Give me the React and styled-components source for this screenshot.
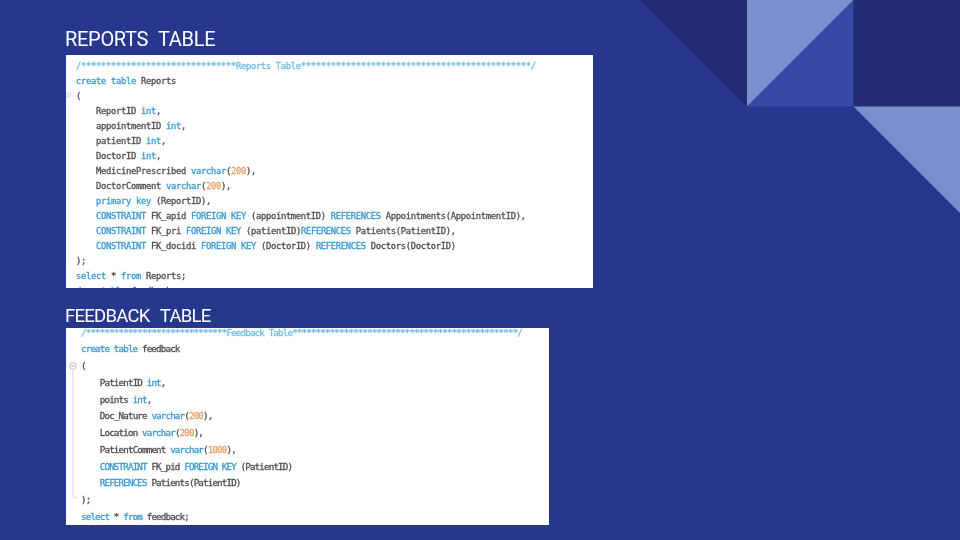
import React from "react";
import styled, { createGlobalStyle } from "styled-components";

const Global = createGlobalStyle`
  html, body { margin: 0; padding: 0; background: #27378d; }
`;

const Slide = styled.main`
  position: relative;
  width: 960px;
  height: 540px;
  overflow: hidden;
  box-sizing: border-box;
  background: #27378d;
  padding: 26px 0 0 65px;
  display: flex;
  flex-direction: column;
  align-items: flex-start;
`;

const Decor = styled.svg`
  position: absolute;
  top: 0;
  right: 0;
  width: 320px;
  height: 214px;
`;

const Title = styled.h2`
  margin: ${(p) => p.$top}px 0 0;
  font-family: "Roboto", "Open Sans", sans-serif;
  font-weight: 400;
  font-size: ${(p) => p.$size}px;
  letter-spacing: ${(p) => p.$track}px;
  word-spacing: ${(p) => p.$word}px;
  line-height: 26px;
  height: ${(p) => p.$h}px;
  color: #fff;
  white-space: pre;
  filter: blur(0.2px);
`;

const Shot = styled.section`
  position: relative;
  margin-left: 1px;
  width: ${(p) => p.$w}px;
  height: ${(p) => p.$h}px;
  background: #fff;
  overflow: hidden;
  box-sizing: border-box;
  padding-left: ${(p) => p.$left}px;
`;

const Code = styled.pre`
  margin: ${(p) => p.$top}px 0 0;
  font-family: "DejaVu Sans Mono", "Liberation Mono", monospace;
  font-size: ${(p) => p.$size}px;
  letter-spacing: ${(p) => p.$track}px;
  line-height: ${(p) => p.$line}px;
  color: #4d4d4d;
  filter: blur(0.45px);
  font-weight: 400;
  -webkit-text-stroke: 0.3px currentColor;
`;

const Line = styled.div`
  height: ${(p) => p.$line}px;
  padding-left: ${(p) => p.$indent || 0}px;
  white-space: pre;
`;

const K = styled.span` color: #3a98d4; `;
const C = styled.span` color: #6fbbe6; `;
const N = styled.span` color: #e8a165; `;

const Fold = styled.svg`
  position: absolute;
  left: ${(p) => p.$x}px;
  top: ${(p) => p.$y}px;
  filter: blur(0.3px);
`;

const star = (n) => "*".repeat(n);

function ReportsCode() {
  const L = ({ $indent, ...p }) => <Line $line={15} $indent={$indent ? 20 : 0} {...p} />;
  return (
    <Code $size={8.8} $track={-0.3} $line={15} $top={3.5}>
      <L><C>/{star(31)}Reports Table{star(46)}/</C></L>
      <L><K>create table</K> Reports</L>
      <L>(</L>
      <L $indent>ReportID <K>int</K>,</L>
      <L $indent>appointmentID <K>int</K>,</L>
      <L $indent>patientID <K>int</K>,</L>
      <L $indent>DoctorID <K>int</K>,</L>
      <L $indent>MedicinePrescribed <K>varchar</K>(<N>200</N>),</L>
      <L $indent>DoctorComment <K>varchar</K>(<N>200</N>),</L>
      <L $indent><K>primary key</K> (ReportID),</L>
      <L $indent><K>CONSTRAINT</K> FK_apid <K>FOREIGN KEY</K> (appointmentID) <K>REFERENCES</K> Appointments(AppointmentID),</L>
      <L $indent><K>CONSTRAINT</K> FK_pri <K>FOREIGN KEY</K> (patientID)<K>REFERENCES</K> Patients(PatientID),</L>
      <L $indent><K>CONSTRAINT</K> FK_docidi <K>FOREIGN KEY</K> (DoctorID) <K>REFERENCES</K> Doctors(DoctorID)</L>
      <L>);</L>
      <L><K>select</K> * <K>from</K> Reports;</L>
      <L><K>drop table</K> feedback;</L>
    </Code>
  );
}

function FeedbackCode() {
  const L = ({ $indent, ...p }) => <Line $line={16.75} $indent={$indent ? 18.8 : 0} {...p} />;
  return (
    <Code $size={9.2} $track={-0.84} $line={16.75} $top={-3.4}>
      <L><C>/{star(30)}Feedback Table{star(48)}/</C></L>
      <L><K>create table</K> feedback</L>
      <L>(</L>
      <L $indent>PatientID <K>int</K>,</L>
      <L $indent>points <K>int</K>,</L>
      <L $indent>Doc_Nature <K>varchar</K>(<N>200</N>),</L>
      <L $indent>Location <K>varchar</K>(<N>200</N>),</L>
      <L $indent>PatientComment <K>varchar</K>(<N>1000</N>),</L>
      <L $indent><K>CONSTRAINT</K> FK_pid <K>FOREIGN KEY</K> (PatientID)</L>
      <L $indent><K>REFERENCES</K> Patients(PatientID)</L>
      <L>);</L>
      <L><K>select</K> * <K>from</K> feedback;</L>
    </Code>
  );
}

export default function App() {
  return (
    <>
      <Global />
      <Slide>
        <Decor viewBox="640 0 320 214">
          <polygon points="640,0 747,0 747,106.5" fill="#212c75" />
          <polygon points="747,0 853.5,0 747,106.5" fill="#7a90ce" />
          <polygon points="853.5,0 853.5,106.5 747,106.5" fill="#3949a8" />
          <rect x="853.5" y="0" width="106.5" height="106.5" fill="#212c75" />
          <polygon points="853.5,106.5 960,106.5 960,213" fill="#7a90ce" />
        </Decor>

        <Title $top={0} $size={20} $track={-0.3} $word={5.5} $h={29}>REPORTS TABLE</Title>
        <Shot $w={527} $h={233} $left={10}>
          <Fold $x={0} $y={36} width="8" height="172" viewBox="0 0 8 172">
            <circle cx="2" cy="4" r="2.5" fill="none" stroke="#c9c9c9" strokeWidth="0.8" />
            <path d="M1 4h2" stroke="#b5b5b5" strokeWidth="0.7" />
            <path d="M2 7V166q0 2 3 2" fill="none" stroke="#eeeeee" strokeWidth="0.7" />
          </Fold>
          <ReportsCode />
        </Shot>

        <Title $top={15} $size={18.5} $track={-0.75} $word={1.5} $h={25}>{"FEEDBACK  TABLE"}</Title>
        <Shot $w={483} $h={197} $left={15}>
          <Fold $x={1.5} $y={32} width="12" height="142" viewBox="0 0 12 142">
            <circle cx="5" cy="6" r="3.3" fill="none" stroke="#b9b9b9" strokeWidth="0.9" />
            <path d="M3 6h4" stroke="#999" strokeWidth="0.8" />
            <path d="M5 9.5V136q0 2 4 2" fill="none" stroke="#cfcfcf" strokeWidth="0.9" />
          </Fold>
          <FeedbackCode />
        </Shot>
      </Slide>
    </>
  );
}
